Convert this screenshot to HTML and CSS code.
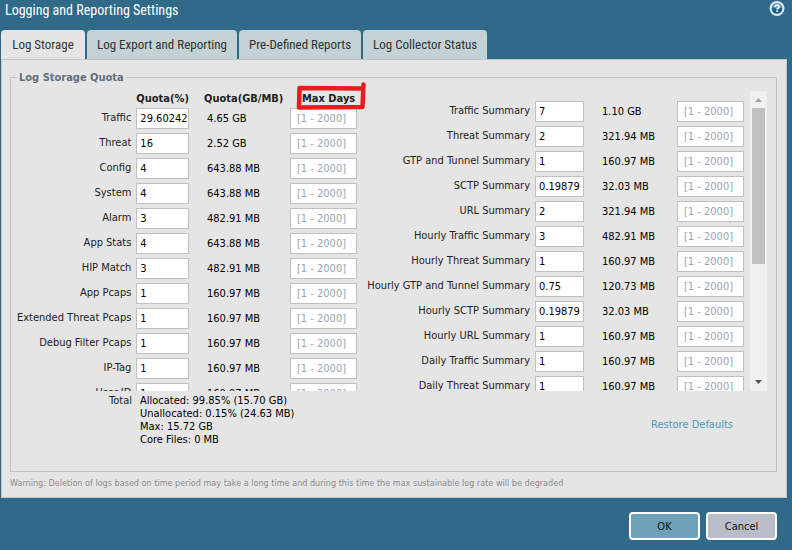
FILE: index.html
```html
<!DOCTYPE html>
<html lang="en">
<head>
<meta charset="utf-8">
<title>Logging and Reporting Settings</title>
<link rel="stylesheet" href="styles.css">
</head>
<body>
<main class="dialog">
  <header class="titlebar">
    <h1 class="title">Logging and Reporting Settings</h1>
    <button class="help" type="button" aria-label="Help">
      <svg viewBox="0 0 16 16" width="16" height="16" aria-hidden="true">
        <circle cx="8" cy="8.500" r="7.500" fill="#dce7f4"/>
        <circle cx="8" cy="8.500" r="5.300" fill="#1d5c8a"/>
        <path d="M3 7.500a5.100 5.100 0 0 1 10 0c-2 1.300-7 1.600-10 0z" fill="#5b94b9"/>
        <path d="M6.200 7c0-2.400 3.800-2.300 3.800-.2C10 8.100 8.200 8 8.200 9.600" fill="none" stroke="#fff" stroke-width="1.700"/>
        <rect x="7.300" y="10.400" width="1.800" height="1.600" fill="#fff"/>
      </svg>
    </button>
  </header>

  <nav class="tabs" role="tablist">
    <button class="tab tab-active" type="button" role="tab" aria-selected="true">Log Storage</button>
    <button class="tab" type="button" role="tab">Log Export and Reporting</button>
    <button class="tab" type="button" role="tab">Pre-Defined Reports</button>
    <button class="tab" type="button" role="tab">Log Collector Status</button>
  </nav>

  <form class="panel" id="quota-form">
    <fieldset class="quota">
      <legend>Log Storage Quota</legend>
      <div class="viewport">
        <table class="grid grid-logs">
          <colgroup><col class="c-label"><col class="c-quota"><col class="c-size"><col class="c-days"></colgroup>
          <thead>
            <tr><td></td><th scope="col"><span class="clip">Quota(%)</span></th><th scope="col" class="h-size">Quota(GB/MB)</th><th scope="col" class="h-days">Max Days
              <svg class="marker" viewBox="0 0 70 28" width="70" height="28" aria-hidden="true"><path d="M67.500 2.500L66.500 25L3 25.500L3.500 6L66 6.500" fill="none" stroke="#e81c1f" stroke-width="4.500" stroke-linejoin="round" stroke-linecap="round"/></svg></th></tr>
          </thead>
          <tbody>
            <tr><th scope="row"><label for="q1">Traffic</label></th><td><input id="q1" value="29.60242"></td><td class="size">4.65 GB</td><td><input aria-label="Traffic max days" placeholder="[1 - 2000]"></td></tr>
            <tr><th scope="row"><label for="q2">Threat</label></th><td><input id="q2" value="16"></td><td class="size">2.52 GB</td><td><input aria-label="Threat max days" placeholder="[1 - 2000]"></td></tr>
            <tr><th scope="row"><label for="q3">Config</label></th><td><input id="q3" value="4"></td><td class="size">643.88 MB</td><td><input aria-label="Config max days" placeholder="[1 - 2000]"></td></tr>
            <tr><th scope="row"><label for="q4">System</label></th><td><input id="q4" value="4"></td><td class="size">643.88 MB</td><td><input aria-label="System max days" placeholder="[1 - 2000]"></td></tr>
            <tr><th scope="row"><label for="q5">Alarm</label></th><td><input id="q5" value="3"></td><td class="size">482.91 MB</td><td><input aria-label="Alarm max days" placeholder="[1 - 2000]"></td></tr>
            <tr><th scope="row"><label for="q6">App Stats</label></th><td><input id="q6" value="4"></td><td class="size">643.88 MB</td><td><input aria-label="App Stats max days" placeholder="[1 - 2000]"></td></tr>
            <tr><th scope="row"><label for="q7">HIP Match</label></th><td><input id="q7" value="3"></td><td class="size">482.91 MB</td><td><input aria-label="HIP Match max days" placeholder="[1 - 2000]"></td></tr>
            <tr><th scope="row"><label for="q8">App Pcaps</label></th><td><input id="q8" value="1"></td><td class="size">160.97 MB</td><td><input aria-label="App Pcaps max days" placeholder="[1 - 2000]"></td></tr>
            <tr><th scope="row"><label for="q9">Extended Threat Pcaps</label></th><td><input id="q9" value="1"></td><td class="size">160.97 MB</td><td><input aria-label="Extended Threat Pcaps max days" placeholder="[1 - 2000]"></td></tr>
            <tr><th scope="row"><label for="q10">Debug Filter Pcaps</label></th><td><input id="q10" value="1"></td><td class="size">160.97 MB</td><td><input aria-label="Debug Filter Pcaps max days" placeholder="[1 - 2000]"></td></tr>
            <tr><th scope="row"><label for="q11">IP-Tag</label></th><td><input id="q11" value="1"></td><td class="size">160.97 MB</td><td><input aria-label="IP-Tag max days" placeholder="[1 - 2000]"></td></tr>
            <tr><th scope="row"><label for="q12">User-ID</label></th><td><input id="q12" value="1"></td><td class="size">160.97 MB</td><td><input aria-label="User-ID max days" placeholder="[1 - 2000]"></td></tr>
          </tbody>
        </table>

        <table class="grid grid-summaries">
          <colgroup><col class="c-label"><col class="c-quota"><col class="c-size"><col class="c-days"></colgroup>
          <tbody>
            <tr><th scope="row"><label for="s1">Traffic Summary</label></th><td><input id="s1" value="7"></td><td class="size">1.10 GB</td><td><input aria-label="Traffic Summary max days" placeholder="[1 - 2000]"></td></tr>
            <tr><th scope="row"><label for="s2">Threat Summary</label></th><td><input id="s2" value="2"></td><td class="size">321.94 MB</td><td><input aria-label="Threat Summary max days" placeholder="[1 - 2000]"></td></tr>
            <tr><th scope="row"><label for="s3">GTP and Tunnel Summary</label></th><td><input id="s3" value="1"></td><td class="size">160.97 MB</td><td><input aria-label="GTP and Tunnel Summary max days" placeholder="[1 - 2000]"></td></tr>
            <tr><th scope="row"><label for="s4">SCTP Summary</label></th><td><input id="s4" value="0.19879"></td><td class="size">32.03 MB</td><td><input aria-label="SCTP Summary max days" placeholder="[1 - 2000]"></td></tr>
            <tr><th scope="row"><label for="s5">URL Summary</label></th><td><input id="s5" value="2"></td><td class="size">321.94 MB</td><td><input aria-label="URL Summary max days" placeholder="[1 - 2000]"></td></tr>
            <tr><th scope="row"><label for="s6">Hourly Traffic Summary</label></th><td><input id="s6" value="3"></td><td class="size">482.91 MB</td><td><input aria-label="Hourly Traffic Summary max days" placeholder="[1 - 2000]"></td></tr>
            <tr><th scope="row"><label for="s7">Hourly Threat Summary</label></th><td><input id="s7" value="1"></td><td class="size">160.97 MB</td><td><input aria-label="Hourly Threat Summary max days" placeholder="[1 - 2000]"></td></tr>
            <tr><th scope="row"><label for="s8">Hourly GTP and Tunnel Summary</label></th><td><input id="s8" value="0.75"></td><td class="size">120.73 MB</td><td><input aria-label="Hourly GTP and Tunnel Summary max days" placeholder="[1 - 2000]"></td></tr>
            <tr><th scope="row"><label for="s9">Hourly SCTP Summary</label></th><td><input id="s9" value="0.19879"></td><td class="size">32.03 MB</td><td><input aria-label="Hourly SCTP Summary max days" placeholder="[1 - 2000]"></td></tr>
            <tr><th scope="row"><label for="s10">Hourly URL Summary</label></th><td><input id="s10" value="1"></td><td class="size">160.97 MB</td><td><input aria-label="Hourly URL Summary max days" placeholder="[1 - 2000]"></td></tr>
            <tr><th scope="row"><label for="s11">Daily Traffic Summary</label></th><td><input id="s11" value="1"></td><td class="size">160.97 MB</td><td><input aria-label="Daily Traffic Summary max days" placeholder="[1 - 2000]"></td></tr>
            <tr><th scope="row"><label for="s12">Daily Threat Summary</label></th><td><input id="s12" value="1"></td><td class="size">160.97 MB</td><td><input aria-label="Daily Threat Summary max days" placeholder="[1 - 2000]"></td></tr>
          </tbody>
        </table>

        <div class="scrollbar" aria-hidden="true">
          <svg class="arrow" viewBox="0 0 17 17" width="17" height="17"><path d="M5 11l3.500-4 3.500 4z" fill="#a3a3a3"/></svg>
          <div class="thumb"></div>
          <svg class="arrow" viewBox="0 0 17 17" width="17" height="17"><path d="M5 6l3.500 4 3.500-4z" fill="#505050"/></svg>
        </div>
      </div>

      <div class="totals">
        <span class="totals-label">Total</span>
        <p class="totals-text">Allocated: 99.85% (15.70 GB)<br>Unallocated: 0.15% (24.63 MB)<br>Max: 15.72 GB<br>Core Files: 0 MB</p>
        <a class="restore" href="#restore">Restore Defaults</a>
      </div>
    </fieldset>
    <p class="warning">Warning: Deletion of logs based on time period may take a long time and during this time the max sustainable log rate will be degraded</p>
  </form>

  <footer class="actions">
    <button class="btn btn-ok" type="submit" form="quota-form">OK</button>
    <button class="btn" type="button">Cancel</button>
  </footer>
</main>
</body>
</html>
```
FILE: styles.css
```css
* { box-sizing: border-box; }

body {
  margin: 0;
  min-height: 100vh;
  background: #306a88;
  color: #222;
  font: 11px/13px "DejaVu Sans Condensed", Tahoma, sans-serif;
}

input, button { font: inherit; color: inherit; }
p { margin: 0; }

.dialog { padding: 0 5px 0 1px; }

/* Title bar */
.titlebar {
  display: flex;
  align-items: flex-start;
  justify-content: space-between;
  height: 30px;
  padding: 0 2px 0 4px;
}
.title {
  margin: 0;
  color: #fff;
  font: 14px/20px "Roboto Condensed", "Liberation Sans Narrow", sans-serif;
}
.help {
  display: flex;
  padding: 0;
  border: 0;
  background: none;
}

/* Tabs */
.tabs { display: flex; gap: 2px; }
.tab {
  min-width: 84px;
  height: 29px;
  padding: 0 10px;
  border: 0;
  border-radius: 4px 4px 0 0;
  background: #c2d2d5;
  color: #333;
  font: 13px/29px "Roboto Condensed", "Liberation Sans Narrow", sans-serif;
}
.tab-active { background: #e5e5e5; }

.panel {
  padding: 11px 9px 7px 8px;
  border: 1px solid #c3c6c8;
  background: #e5e5e5;
}

/* Quota group */
.quota {
  min-width: 0;
  margin: 0;
  padding: 7px 9px 0 0;
  border: 1px solid #c3c3c3;
}
.quota legend {
  margin-left: 6px;
  padding: 0 2px;
  color: #5f6f80;
  font-weight: bold;
}

/* The top padding leaves room for the highlight frame above the rows */
.viewport {
  display: flex;
  height: 312px;
  margin-top: -12px;
  padding-top: 12px;
  overflow: hidden;
}

.grid {
  align-self: flex-start;
  table-layout: fixed;
  border-collapse: collapse;
}
.grid-logs { flex: 346 1 0; }
.grid-summaries { flex: 387 1 0; margin-top: 8px; }
.c-quota { width: 52px; }
.grid-summaries .c-quota { width: 49px; }
.c-size { width: 101px; }
.grid-summaries .c-size { width: 93px; }
.c-days { width: 67px; }

.grid th, .grid td { padding: 0; text-align: left; }
.grid thead tr { height: 15px; }
.grid tbody tr { height: 25px; }
.grid thead th { white-space: nowrap; }
.grid tbody th {
  padding: 0 5px 2px 0;
  text-align: right;
  font-weight: normal;
  white-space: nowrap;
}
.clip { display: block; overflow: hidden; }
.grid .h-size { padding-left: 15px; }
.grid .h-days { position: relative; padding-left: 12px; }
.grid .size { padding-left: 18px; color: #000; }

.grid input {
  display: block;
  width: 100%;
  height: 21px;
  padding: 0 0 0 3px;
  border: 1px solid #c0c0c0;
  border-radius: 0;
  background: #fff;
  color: #000;
}
.grid td:last-child input { padding: 0 6px; }
.grid input::placeholder { color: #9aa5b2; opacity: 1; }

/* Highlight frame over the Max Days heading */
.marker {
  position: absolute;
  left: 6px;
  top: -9px;
}

.scrollbar {
  display: flex;
  flex-direction: column;
  justify-content: space-between;
  width: 17px;
  margin-left: 6px;
  background: #f1f1f1;
}
.arrow { display: block; flex: none; }
.thumb {
  width: 13px;
  height: 156px;
  margin: 0 2px auto;
  background: #c1c1c1;
}

.totals {
  display: flex;
  min-height: 80px;
  padding-top: 3px;
}
.totals-label {
  flex: none;
  width: 121px;
  text-align: right;
}
.totals-text {
  flex: 1;
  margin-left: 8px;
  color: #000;
}
.restore {
  margin: 24px 34px 0 0;
  color: #4f97b8;
  text-decoration: none;
}

.warning {
  margin-top: 5px;
  color: #8b8b8b;
  font-size: 9px;
}

/* Footer */
.actions {
  display: flex;
  justify-content: flex-end;
  gap: 6px;
  padding: 14px 10px 0 0;
}
.btn {
  width: 71px;
  height: 28px;
  padding: 0;
  border: 2px solid #fff;
  border-radius: 4px;
  background: #babec8;
  color: #111;
}
.btn-ok { background: #6ca1b8; }
```
